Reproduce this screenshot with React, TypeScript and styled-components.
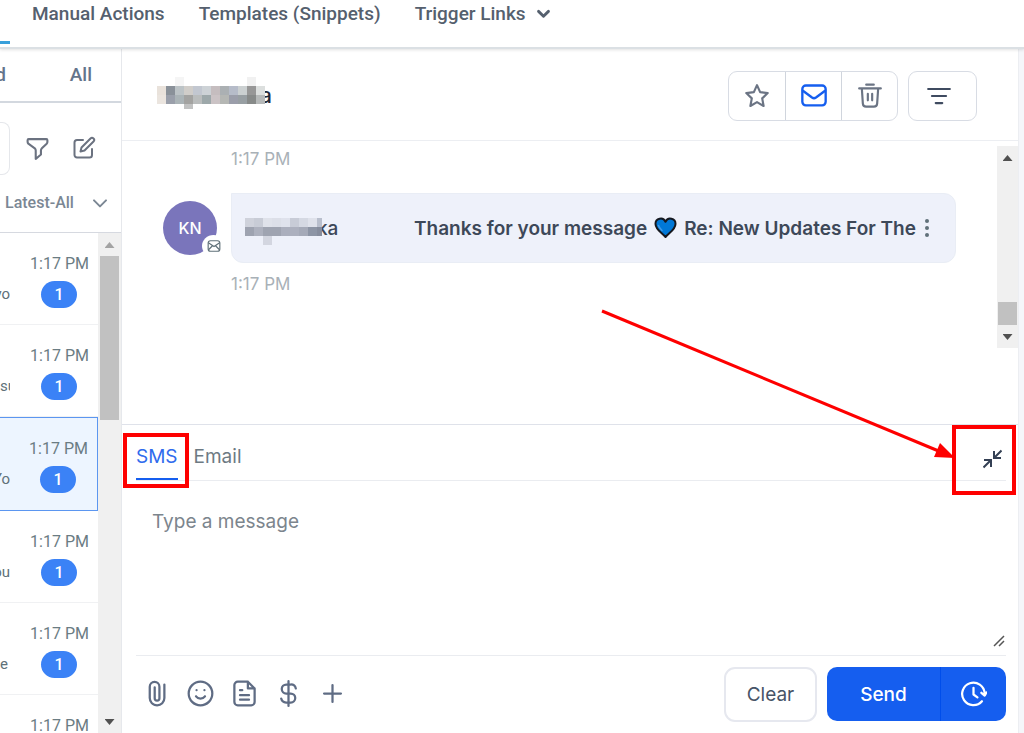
import React from 'react';
import styled, { createGlobalStyle, css } from 'styled-components';

const Global = createGlobalStyle`
  *, *::before, *::after { box-sizing: border-box; }
  body { margin: 0; background: #f5f6fa; overflow: hidden; }
  button, textarea { font: inherit; color: inherit; margin: 0; }
  button { display: flex; align-items: center; justify-content: center; padding: 0; border: 0; background: none; cursor: pointer; }
  a { color: inherit; text-decoration: none; }
  svg { display: block; flex: none; }
`;

const Page = styled.div`
  display: flex;
  flex-direction: column;
  height: 100vh;
  background: #fff;
  font-family: Roboto, 'Liberation Sans', sans-serif;
  color: #607179;
`;

const TopNav = styled.nav`
  position: relative;
  z-index: 1;
  flex: none;
  display: flex;
  height: 49px;
  background: #fff;
  border-bottom: 2px solid #dbe0e4;
  box-shadow: 0 1px 3px rgba(0, 0, 0, 0.12);
`;

const ActiveTab = styled.a`
  width: 10px;
  height: 44px;
  margin-right: 22px;
  border-bottom: 3px solid #38a0db;
`;

const NavLink = styled.a`
  display: flex;
  gap: 9px;
  height: 26px;
  margin-right: 34px;
  align-items: center;
  font-size: 19px;
  font-weight: 500;
  color: #55606e;
  white-space: nowrap;
`;

const Body = styled.div`
  flex: 1;
  min-height: 0;
  display: flex;
`;

const Sidebar = styled.aside`
  flex: none;
  display: flex;
  flex-direction: column;
  width: 122px;
  border-right: 1px solid #e6e8ec;
`;

const FilterTabs = styled.div`
  flex: none;
  display: flex;
  justify-content: space-between;
  height: 54px;
  padding: 0 29px 2px 0;
  border-bottom: 2px solid #d3d8df;
  font-size: 19px;
  font-weight: 500;
  color: #64748b;
`;

const CutTab = styled.button`
  width: 6px;
  overflow: hidden;
  && { justify-content: flex-end; }
`;

const SearchRow = styled.div`
  flex: none;
  display: flex;
  align-items: center;
  height: 90px;
  color: #6b7280;
`;

const SearchEdge = styled.div`
  width: 10px;
  height: 53px;
  margin-right: 15px;
  border: 1px solid #e5e7eb;
  border-left: 0;
  border-radius: 0 8px 8px 0;
`;

const IconButton = styled.button<{ $gap?: number }>`
  margin-right: ${p => p.$gap ?? 0}px;
`;

const SortButton = styled.button`
  flex: none;
  height: 40px;
  font-size: 16px;
  color: #7b8794;
  && {
    justify-content: space-between;
    padding: 0 13px 20px 5px;
    border-bottom: 1px solid #d6d9e0;
    font-weight: 500;
  }
`;

const ListArea = styled.div`
  flex: 1;
  min-height: 0;
  display: flex;
`;

const List = styled.ul`
  flex: 1;
  min-width: 0;
  margin: 0;
  padding: 0;
  overflow: hidden;
  list-style: none;
`;

const Item = styled.li<{ $selected?: boolean }>`
  height: 92px;
  padding-top: 20px;
  border-bottom: 1px solid #f0f1f3;
  ${p => p.$selected && css`
    height: 94px;
    border: 1px solid #5b96f0;
    border-left: 0;
    background: #edf5ff;
  `}
`;

const Time = styled.div`
  padding-right: 9px;
  font-size: 16px;
  line-height: 22px;
  text-align: right;
  white-space: nowrap;
  color: #6b7c83;
`;

const ItemRow = styled.div`
  display: flex;
  align-items: center;
  justify-content: space-between;
  height: 28px;
  margin-top: 5px;
  padding-right: 21px;
`;

const Preview = styled.span<{ $end?: boolean }>`
  display: flex;
  justify-content: ${p => (p.$end ? 'flex-end' : 'flex-start')};
  width: 10px;
  overflow: hidden;
  font-size: 15px;
`;

const Badge = styled.span`
  width: 36px;
  height: 27px;
  border-radius: 14px;
  background: #3b82f6;
  color: #fff;
  font-size: 16px;
  font-weight: 500;
  line-height: 27px;
  text-align: center;
`;

const ScrollTrack = styled.div`
  flex: none;
  display: flex;
  flex-direction: column;
  align-items: center;
  width: 23px;
  background: #f0f0f0;
`;

const Arrow = styled.i<{ $up?: boolean; $faint?: boolean }>`
  flex: none;
  width: 10px;
  height: 6px;
  margin: 9px 0 8px;
  background: ${p => (p.$faint ? '#a3a3a3' : '#505050')};
  clip-path: ${p => (p.$up ? 'polygon(50% 0, 100% 100%, 0 100%)' : 'polygon(0 0, 100% 0, 50% 100%)')};
`;

const Thumb = styled.i<{ $h: number; $end?: boolean }>`
  width: 19px;
  height: ${p => p.$h}px;
  margin-bottom: ${p => (p.$end ? '0' : 'auto')};
  margin-top: ${p => (p.$end ? 'auto' : '0')};
  background: #c1c1c1;
`;

const Main = styled.main`
  flex: 1;
  min-width: 0;
  display: flex;
  flex-direction: column;
  font-family: Inter, 'Liberation Sans', sans-serif;
  border-right: 1px solid #eceef2;
`;

const Gutter = styled.div`
  flex: none;
  width: 5px;
  background: #f5f6fa;
`;

const ThreadHeader = styled.header`
  flex: none;
  display: flex;
  align-items: center;
  height: 92px;
  padding: 2px 41px 0 35px;
  border-bottom: 1px solid #eceef2;
`;

const Name = styled.h1`
  display: flex;
  align-items: center;
  flex: 1;
  margin: 0;
  font-size: 21px;
  font-weight: 500;
  color: #1f2937;
`;

const Tail = styled.span`
  margin-left: -5px;
`;

const ButtonGroup = styled.div`
  display: flex;
  height: 50px;
  margin-right: 10px;
  border: 1px solid #d8dce4;
  border-radius: 9px;
  color: #6b7484;
`;

const GroupButton = styled.button<{ $active?: boolean }>`
  width: 56px;
  color: ${p => (p.$active ? '#155eef' : 'inherit')};
  & + & { border-left: 1px solid #d0d5dd; }
`;

const FilterButton = styled.button`
  width: 69px;
  height: 50px;
  color: #3f4b60;
  && { padding-right: 7px; border: 1px solid #d8dce4; border-radius: 9px; }
`;

const Thread = styled.section`
  flex: 1;
  min-height: 0;
  display: flex;
  justify-content: space-between;
  align-items: flex-start;
`;

const Messages = styled.div`
  flex: 1;
  min-width: 0;
  padding: 7px 41px 0 41px;
`;

const Stamp = styled.div`
  padding-left: 68px;
  font-size: 17px;
  line-height: 22px;
  color: #a9b1b7;
`;

const Message = styled.article`
  display: flex;
  align-items: center;
  gap: 14px;
  margin: 23px 0 10px;
`;

const Avatar = styled.div`
  position: relative;
  flex: none;
  width: 54px;
  height: 54px;
  border-radius: 50%;
  background: #7a75bb;
  color: #fff;
  font-size: 16px;
  font-weight: 500;
  line-height: 54px;
  text-align: center;
`;

const Channel = styled.span`
  position: absolute;
  right: -8px;
  bottom: -2px;
  display: flex;
  align-items: center;
  justify-content: center;
  width: 23px;
  height: 22px;
  border-radius: 50%;
  background: #fff;
  color: #607179;
`;

const Bubble = styled.div`
  flex: 1;
  min-width: 0;
  display: flex;
  align-items: center;
  height: 70px;
  padding: 0 22px 0 13px;
  border: 1px solid #e9edf5;
  border-radius: 0 12px 12px 12px;
  background: #eef1fa;
  font-size: 19px;
  font-weight: 600;
  color: #3d4858;
`;

const Sender = styled.div`
  flex: none;
  display: flex;
  align-items: center;
  width: 169px;
  font-weight: 500;
`;

const Subject = styled.div`
  flex: 1;
  min-width: 0;
  display: flex;
  align-items: center;
  gap: 7px;
  overflow: hidden;
  white-space: nowrap;
`;

const ThreadScroll = styled(ScrollTrack)`
  width: 21px;
  height: 202px;
  margin-top: 5px;
`;

const Composer = styled.section`
  position: relative;
  flex: none;
  padding: 0 12px 12px 14px;
  border-top: 1px solid #dfe2ea;
`;

const ComposerTabs = styled.div`
  display: flex;
  gap: 16px;
  height: 56px;
  border-bottom: 1px solid #eaecf0;
  font-size: 19px;
`;

const ComposerTab = styled.button<{ $active?: boolean }>`
  height: 55px;
  color: ${p => (p.$active ? '#2f6bed' : '#6d7a83')};
  && { padding-top: 10px; border-bottom: 2px solid ${p => (p.$active ? '#155eef' : 'transparent')}; }
`;

const Collapse = styled.button`
  height: 68px;
  margin-left: auto;
  color: #344054;
  && { padding-right: 4px; }
`;

const Field = styled.div`
  position: relative;
  display: flex;
  border-bottom: 1px solid #eaecf0;
`;

const MessageBox = styled.textarea`
  flex: 1;
  height: 174px;
  padding: 28px 16px;
  border: 0;
  outline: 0;
  resize: none;
  background: none;
  && { font-size: 19px; line-height: 26px; }
  &::placeholder { color: #7c858d; opacity: 1; }
`;

const Grip = styled.svg`
  position: absolute;
  right: 1px;
  bottom: 8px;
`;

const Actions = styled.div`
  display: flex;
  align-items: center;
  height: 54px;
  margin-top: 11px;
  color: #5f6c84;
`;

const Tools = styled.div`
  flex: 1;
  display: flex;
  gap: 17px;
  padding: 0 0 1px 7px;
`;

const ClearButton = styled.button`
  width: 93px;
  height: 55px;
  margin-right: 10px;
  color: #475467;
  && { border: 2px solid #e6e8ef; border-radius: 11px; font-size: 19px; }
`;

const SendGroup = styled.div`
  display: flex;
  height: 54px;
  border-radius: 10px;
  overflow: hidden;
  background: #155eef;
  color: #fff;
`;

const SendButton = styled.button<{ $w: number }>`
  width: ${p => p.$w}px;
  && { font-size: 19px; font-weight: 500; }
  & + & { border-left: 1px solid #004eeb; }
`;

const Highlight = styled.i<{ $side: 'left' | 'right' }>`
  position: absolute;
  z-index: 2;
  border: 4px solid #fe0000;
  pointer-events: none;
  ${p => (p.$side === 'left'
    ? css`left: 1px; top: 8px; width: 66px; height: 55px;`
    : css`right: 2px; top: 0; width: 64px; height: 70px;`)}
`;

const Pointer = styled.svg`
  position: absolute;
  z-index: 2;
  right: 61px;
  top: -117px;
  pointer-events: none;
`;

const Stroke = ({ size = 28, width = 2, children }: { size?: number; width?: number; children: React.ReactNode }) => (
  <svg width={size} height={size} viewBox="0 0 24 24" fill="none" stroke="currentColor" strokeWidth={width} strokeLinecap="round" strokeLinejoin="round" aria-hidden="true">
    {children}
  </svg>
);

const TITLE_TOP = ['#e9e2db', '#8a9199', '#bcc3c6', '#d0cdc9', '#c2c7d0', '#cdd2d6', '#c5bdbf', '#abb0b3', '#b6bcc9', '#cbd0d1', '#979797', '#dcdfde'];
const TITLE_BOTTOM = ['#ebe5df', '#9a9faa', '#abb4b7', '#a3a3a1', '#babdbd', '#9da8aa', '#cbc3c5', '#b5b7b4', '#9b9eaa', '#989fa3', '#878a89', '#b6b9b9'];
const SENDER_TOP = ['#cfd2db', '#c8ccd6', '#dfe2ea', '#dcdfe8', '#dfe2ec', '#c8ccd7', '#d5d9e3', '#dfe2eb', '#b9bfcd'];
const SENDER_BOTTOM = ['#9ea3b0', '#adb1be', '#9fa4b1', '#9fa4b1', '#abafbd', '#acb0be', '#a5aab8', '#8d95a5', '#868d9d'];

const MosaicSvg = styled.svg`
  position: relative;
  z-index: 1;
`;

const Mosaic = ({ width, top, bottom, extra }: { width: number; top: string[]; bottom: string[]; extra: [number, number, number, string][] }) => (
  <MosaicSvg width={width} height="38" viewBox={`0 0 ${width} 38`} shapeRendering="crispEdges" aria-hidden="true">
    {top.map((c, i) => <rect key={i} x={i * 9} y="9" width="9" height="9" fill={c} />)}
    {bottom.map((c, i) => <rect key={i} x={i * 9} y="18" width="9" height="9" fill={c} />)}
    {extra.map(([x, y, h, c]) => <rect key={x} x={x} y={y} width="9" height={h} fill={c} />)}
  </MosaicSvg>
);

const ITEMS = [
  { text: 'yo', end: true },
  { text: 'su' },
  { text: 'Yo', end: true, selected: true },
  { text: 'you', end: true },
  { text: 'e' },
  { text: 'yo' },
];

export default function App() {
  return (
    <>
      <Global />
      <Page>
        <TopNav>
          <ActiveTab href="#" aria-label="Conversations" />
          <NavLink href="#">Manual Actions</NavLink>
          <NavLink href="#">Templates (Snippets)</NavLink>
          <NavLink href="#">
            Trigger Links
            <Stroke size={17} width={4}><path d="m5 9 7 7 7-7" /></Stroke>
          </NavLink>
        </TopNav>
        <Body>
          <Sidebar>
            <FilterTabs>
              <CutTab>d</CutTab>
              <button>All</button>
            </FilterTabs>
            <SearchRow>
              <SearchEdge />
              <IconButton $gap={22} aria-label="Filter">
                <Stroke size={25}><path d="M3.500 3h17a1 1 0 0 1 1 1v1.800c0 .6-.3 1.200-.7 1.600l-4.600 4.400a3 3 0 0 0-.9 2.200v3.700l-5 4.300V14a3 3 0 0 0-.9-2.200L3.200 7.400c-.4-.4-.7-1-.7-1.600V4a1 1 0 0 1 1-1z" /></Stroke>
              </IconButton>
              <IconButton aria-label="New conversation">
                <Stroke size={24}><path d="M11 4H5a2.500 2.500 0 0 0-2.500 2.500V19A2.500 2.500 0 0 0 5 21.500h12.500A2.500 2.500 0 0 0 20 19v-6" /><path d="M18.500 2.500a2.100 2.100 0 0 1 3 3L12.500 14.500l-4 1 1-4z" /></Stroke>
              </IconButton>
            </SearchRow>
            <SortButton>
              Latest-All
              <Stroke size={16} width={3}><path d="m3 8 9 9 9-9" /></Stroke>
            </SortButton>
            <ListArea>
              <List>
                {ITEMS.map((item, i) => (
                  <Item key={i} $selected={item.selected}>
                    <Time>1:17 PM</Time>
                    <ItemRow>
                      <Preview $end={item.end}>{item.text}</Preview>
                      <Badge>1</Badge>
                    </ItemRow>
                  </Item>
                ))}
              </List>
              <ScrollTrack>
                <Arrow $up $faint />
                <Thumb $h={164} />
                <Arrow />
              </ScrollTrack>
            </ListArea>
          </Sidebar>

          <Main>
            <ThreadHeader>
              <Name>
                <Mosaic width={108} top={TITLE_TOP} bottom={TITLE_BOTTOM} extra={[[18, 0, 9, '#f5f5f5'], [90, 0, 9, '#f1f1f1'], [27, 27, 5, '#c1c2c2']]} />
                <Tail>a</Tail>
              </Name>
              <ButtonGroup>
                <GroupButton aria-label="Star">
                  <Stroke size={26}><path d="m12 2 2.900 6.400 7 .9-5.100 4.900 1.300 7L12 17.700l-6.100 3.500 1.300-7L2.100 9.300l7-.9z" /></Stroke>
                </GroupButton>
                <GroupButton $active aria-label="Mark as read">
                  <Stroke size={28}><rect x="2" y="3" width="20" height="17" rx="3" /><path d="m2.500 7.500 7.800 5.800a3 3 0 0 0 3.400 0L21.500 7.500" /></Stroke>
                </GroupButton>
                <GroupButton aria-label="Delete">
                  <Stroke size={26}><path d="M8.500 1.500h7M2 5h20M4.500 5.500l.9 13.500a3 3 0 0 0 3 2.800h7.200a3 3 0 0 0 3-2.800l.9-13.500M10 10v6M14 10v6" /></Stroke>
                </GroupButton>
              </ButtonGroup>
              <FilterButton aria-label="Filter messages">
                <Stroke size={26}><path d="M2 5.500h20M5.500 12h13M9 18.500h6" /></Stroke>
              </FilterButton>
            </ThreadHeader>

            <Thread>
              <Messages>
                <Stamp>1:17 PM</Stamp>
                <Message>
                  <Avatar>
                    KN
                    <Channel><Stroke size={14} width={2}><rect x="2" y="3" width="20" height="18" rx="4" /><path d="m3 7 9 6 9-6M3 18l6-6M21 18l-6-6" /></Stroke></Channel>
                  </Avatar>
                  <Bubble>
                    <Sender>
                      <Mosaic width={77} top={SENDER_TOP} bottom={SENDER_BOTTOM} extra={[[18, 27, 9, '#d3d6e0']]} />
                      <Tail>ka</Tail>
                    </Sender>
                    <Subject>
                      <span>Thanks for your message</span>
                      <svg width="23" height="22" viewBox="0 0 23 22" aria-label="blue heart">
                        <path d="M11.500 20C8 16 1.500 12.500 1.500 7a5.200 5.200 0 0 1 10-2.200A5.200 5.200 0 0 1 21.500 7c0 5.500-6.500 9-10 13z" fill="#0078d7" stroke="#15181f" strokeWidth="2" strokeLinejoin="round" />
                        <path d="M4.500 8.500c.5 2 2 3.500 3.500 5" fill="none" stroke="#3f9ae6" strokeWidth="1.500" strokeLinecap="round" />
                      </svg>
                      <span>Re: New Updates For The</span>
                    </Subject>
                    <IconButton aria-label="More">
                      <svg width="12" height="20" viewBox="0 0 12 20" fill="#607179"><circle cx="6" cy="3" r="2" /><circle cx="6" cy="10" r="2" /><circle cx="6" cy="17" r="2" /></svg>
                    </IconButton>
                  </Bubble>
                </Message>
                <Stamp>1:17 PM</Stamp>
              </Messages>
              <ThreadScroll>
                <Arrow $up />
                <Thumb $h={23} $end />
                <Arrow />
              </ThreadScroll>
            </Thread>

            <Composer>
              <ComposerTabs>
                <ComposerTab $active>SMS</ComposerTab>
                <ComposerTab>Email</ComposerTab>
                <Collapse aria-label="Collapse">
                  <svg width="19" height="20" viewBox="0 0 19 20" fill="none" stroke="currentColor" strokeWidth="2" aria-hidden="true"><path d="M18.500 1.500l-6.500 6.500M11 2v7h7M.5 18.500 7 12M1 11h7v7" /></svg>
                </Collapse>
              </ComposerTabs>
              <Field>
                <MessageBox placeholder="Type a message" aria-label="Message" />
                <Grip width="12" height="12" viewBox="0 0 12 12" stroke="#555" strokeWidth="1.500"><path d="M1 11 11 1M6 11l5-5" /></Grip>
              </Field>
              <Actions>
                <Tools>
                  <IconButton aria-label="Attach">
                    <Stroke size={27}><path d="M19 4v12a6.500 6.500 0 0 1-13 0V6a4.300 4.300 0 0 1 8.600 0v10.200a2 2 0 0 1-4.200 0V6.500" /></Stroke>
                  </IconButton>
                  <IconButton aria-label="Emoji">
                    <Stroke size={27}><circle cx="12" cy="12" r="10.500" /><path d="M8 14.500s1.500 2 4 2 4-2 4-2M8.500 9h.01M15.500 9h.01" /></Stroke>
                  </IconButton>
                  <IconButton aria-label="Template">
                    <Stroke size={27}><path d="M15 1.500H6A3 3 0 0 0 3 4.500v15a3 3 0 0 0 3 3h12a3 3 0 0 0 3-3V7.500zM15 1.500v6h6M8 9h2M8 13.500h8M8 17.500h8" /></Stroke>
                  </IconButton>
                  <IconButton aria-label="Payment">
                    <Stroke size={27}><path d="M12 1v22M18.500 7.500A4.500 4.500 0 0 0 14 4h-4a4 4 0 0 0 0 8h4a4 4 0 0 1 0 8h-4a4.500 4.500 0 0 1-4.500-3.500" /></Stroke>
                  </IconButton>
                  <IconButton aria-label="More">
                    <Stroke size={27}><path d="M12 4.500v15M4.500 12h15" /></Stroke>
                  </IconButton>
                </Tools>
                <ClearButton>Clear</ClearButton>
                <SendGroup>
                  <SendButton $w={113}>Send</SendButton>
                  <SendButton $w={66} aria-label="Schedule">
                    <Stroke size={27}><path d="M19.500 18A10 10 0 1 1 21.900 11M19 10.500l2.900 2.500 1.600-2.900M12 6v6l3.500 2.500" /></Stroke>
                  </SendButton>
                </SendGroup>
              </Actions>
              <Highlight $side="left" />
              <Highlight $side="right" />
              <Pointer width="358" height="154" viewBox="0 0 358 154" aria-hidden="true">
                <path d="M3 3 342 144" stroke="#fe0000" strokeWidth="3" />
                <path d="M356 150 335 149 341 135z" fill="#fe0000" />
              </Pointer>
            </Composer>
          </Main>
          <Gutter />
        </Body>
      </Page>
    </>
  );
}
